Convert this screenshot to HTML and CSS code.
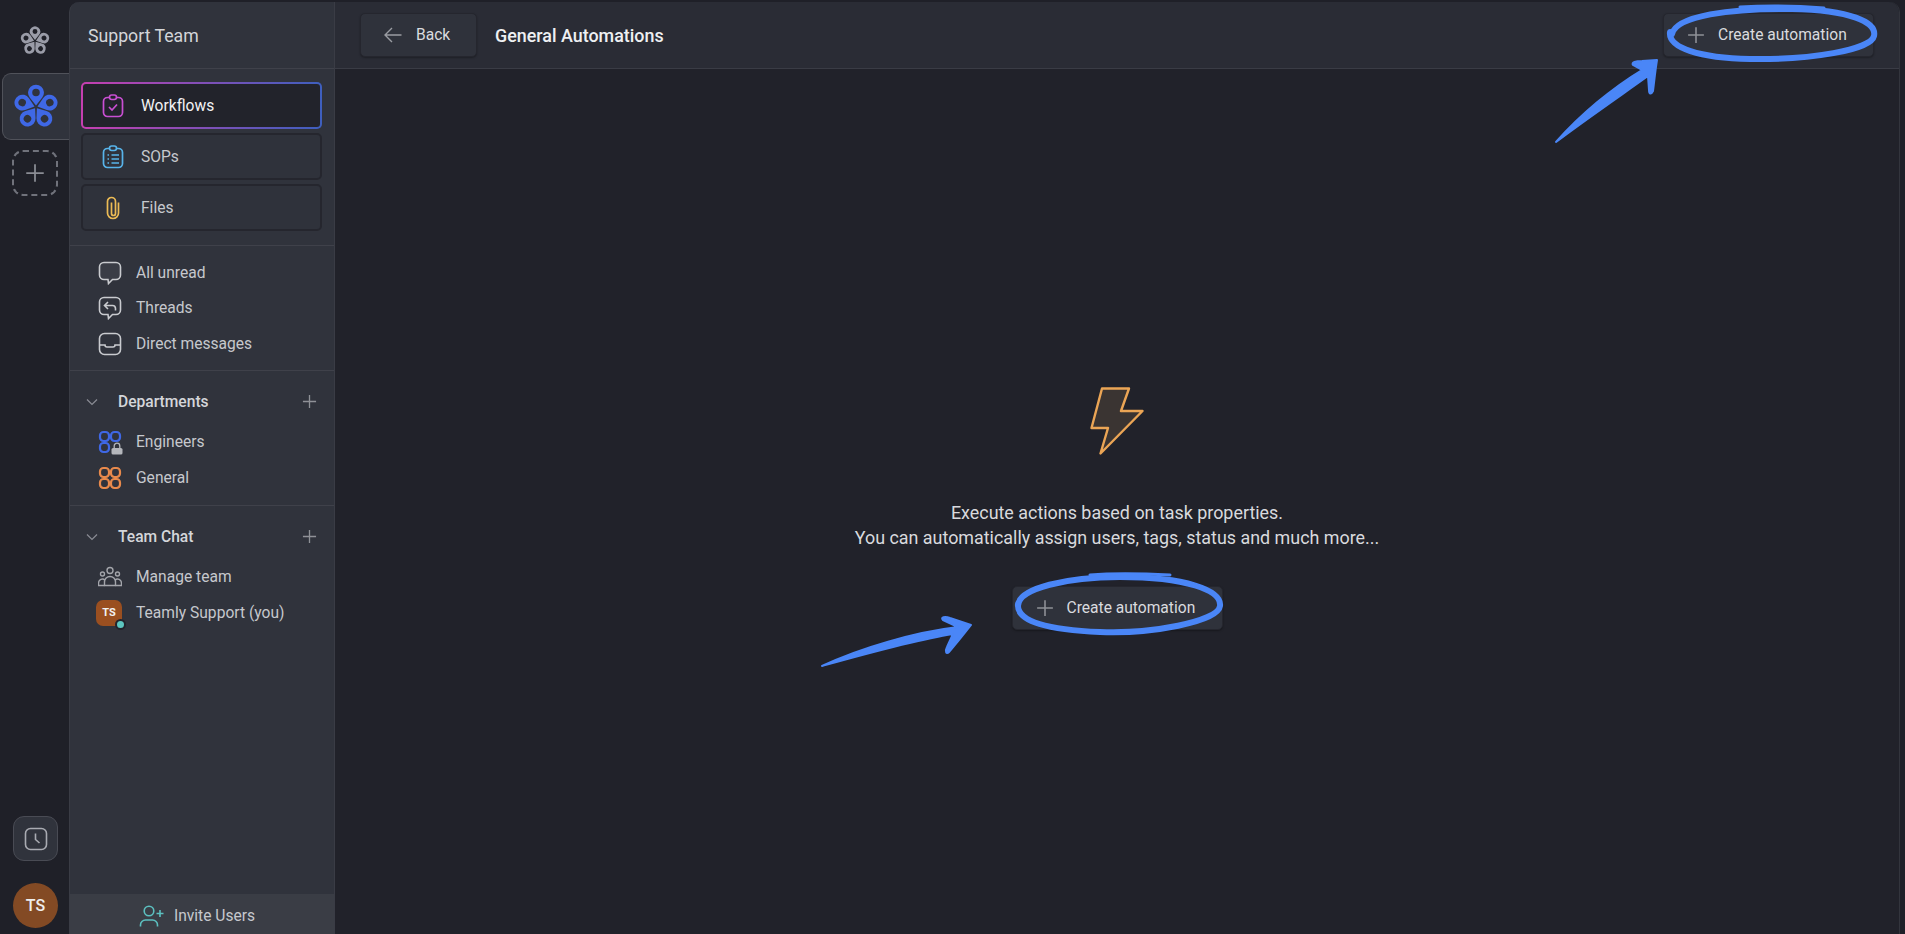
FILE: index.html
```html
<!DOCTYPE html>
<html>
<head>
<meta charset="utf-8">
<title>General Automations</title>
<link rel="stylesheet" href="styles.css">
</head>
<body>

<svg class="defs" width="0" height="0">
  <symbol id="petals" viewBox="-22 -22 44 44">
    <g id="petal">
      <path d="M0 -1.5 L-6 -9 A7.6 7.6 0 1 1 6 -9 Z M0 -17.5 A3.6 3.6 0 1 0 0 -10.3 A3.6 3.6 0 1 0 0 -17.5 Z" fill-rule="evenodd" />
    </g>
    <use href="#petal" transform="rotate(72)" />
    <use href="#petal" transform="rotate(144)" />
    <use href="#petal" transform="rotate(216)" />
    <use href="#petal" transform="rotate(288)" />
  </symbol>
  <symbol id="plus" viewBox="0 0 16 16">
    <path d="M8 1v14M1 8h14" fill="none" stroke="currentColor" stroke-width="1.4" />
  </symbol>
  <symbol id="chevron" viewBox="0 0 12 8">
    <path d="M1 1.5l5 5 5-5" fill="none" stroke="currentColor" stroke-width="1.2" />
  </symbol>
  <symbol id="apps" viewBox="0 0 24 24">
    <g fill="none" stroke="currentColor" stroke-width="2.2">
      <rect x="2" y="2" width="9" height="9" rx="3.5" />
      <rect x="13" y="2" width="9" height="9" rx="3.5" />
      <rect x="2" y="13" width="9" height="9" rx="3.5" />
    </g>
  </symbol>
</svg>

<nav class="rail">
  <div class="rail-logo">
    <svg class="logo-small"><use href="#petals" /></svg>
  </div>
  <div class="rail-tab">
    <svg class="logo-big"><use href="#petals" /></svg>
  </div>
  <div class="rail-add">
    <svg class="rail-add-icon"><use href="#plus" /></svg>
  </div>
  <div class="rail-bottom">
    <div class="rail-clock">
      <svg width="24" height="24" viewBox="0 0 24 24" fill="none" stroke="#a9abb2" stroke-width="1.6">
        <rect x="1.5" y="1.5" width="21" height="21" rx="5" />
        <path d="M11.5 6.5v6l4 3.5" />
      </svg>
    </div>
    <div class="rail-avatar">TS</div>
  </div>
</nav>

<aside class="sidebar">
  <div class="team-name">Support Team</div>

  <div class="nav-group">
    <div class="nav-btn nav-btn-active">
      <svg class="nav-icon" viewBox="0 0 24 24" fill="none" stroke="#c94fd3" stroke-width="1.7">
        <rect x="2.5" y="3.5" width="19" height="19" rx="4" />
        <rect x="8.5" y="1" width="7" height="4.5" rx="2.2" fill="#22232b" />
        <path d="M8 13l3 3 5-5.5" />
      </svg>
      <span>Workflows</span>
    </div>
    <div class="nav-btn">
      <svg class="nav-icon" viewBox="0 0 24 24" fill="none" stroke="#58b4ea" stroke-width="1.7">
        <rect x="2.5" y="3.5" width="19" height="19" rx="4" />
        <rect x="8.5" y="1" width="7" height="4.5" rx="2.2" fill="#2f323b" />
        <path d="M6.5 10h1.5M10.5 10h7.5M6.5 14h1.5M10.5 14h7.5M6.5 18h1.5M10.5 18h7.5" />
      </svg>
      <span>SOPs</span>
    </div>
    <div class="nav-btn">
      <svg class="nav-icon" viewBox="0 0 24 24" fill="none" stroke="#ecbb55" stroke-width="1.7">
        <path d="M10.5 6.5v11a2 2 0 0 0 4 0V5.5a4 4 0 0 0-8 0V17a5.5 5.5 0 0 0 11 0V6.5" />
      </svg>
      <span>Files</span>
    </div>
  </div>

  <ul class="list list-top">
    <li class="row">
      <svg class="row-icon" viewBox="0 0 24 24" fill="#3a3d46" stroke="#c9cbcf" stroke-width="1.6">
        <path d="M6 1.5h12a4.5 4.5 0 0 1 4.5 4.5v8a4.5 4.5 0 0 1-4.5 4.5h-3.5L10.5 22.5l-.5-4H6A4.5 4.5 0 0 1 1.5 14V6A4.5 4.5 0 0 1 6 1.5z" />
      </svg>
      <span>All unread</span>
    </li>
    <li class="row">
      <svg class="row-icon" viewBox="0 0 24 24" fill="none" stroke="#c9cbcf" stroke-width="1.6">
        <path d="M6 1.5h12a4.5 4.5 0 0 1 4.5 4.5v8a4.5 4.5 0 0 1-4.5 4.5h-3.5L10.5 22.5l-.5-4H6A4.5 4.5 0 0 1 1.5 14V6A4.5 4.5 0 0 1 6 1.5z" />
        <path d="M10 6L6.5 9.5 10 13M6.5 9.5h8a3 3 0 0 1 3 3v2" />
      </svg>
      <span>Threads</span>
    </li>
    <li class="row">
      <svg class="row-icon" viewBox="0 0 24 24" fill="none" stroke="#c9cbcf" stroke-width="1.6">
        <rect x="1.5" y="1.5" width="21" height="21" rx="5" />
        <path d="M1.5 13h5.5a2 2 0 0 0 2 2h6a2 2 0 0 0 2-2h5.5" />
      </svg>
      <span>Direct messages</span>
    </li>
  </ul>

  <section class="section">
    <div class="section-head">
      <svg class="chevron"><use href="#chevron" /></svg>
      <span>Departments</span>
      <svg class="section-plus"><use href="#plus" /></svg>
    </div>
    <ul class="list">
      <li class="row">
        <span class="row-icon apps-wrap">
          <svg class="row-icon apps-blue"><use href="#apps" /></svg>
          <svg class="apps-lock" viewBox="0 0 12 13">
            <path d="M3.2 6V4a2.8 2.8 0 0 1 5.6 0v2" fill="none" stroke="#b4b6bb" stroke-width="1.3" />
            <rect x="0.5" y="6" width="11" height="6.5" rx="1.6" fill="#b4b6bb" />
          </svg>
        </span>
        <span>Engineers</span>
      </li>
      <li class="row">
        <svg class="row-icon apps-orange" viewBox="0 0 24 24" fill="none" stroke="currentColor" stroke-width="2.2">
          <rect x="2" y="2" width="9" height="9" rx="3.5" />
          <rect x="13" y="2" width="9" height="9" rx="3.5" />
          <rect x="2" y="13" width="9" height="9" rx="3.5" />
          <rect x="13" y="13" width="9" height="9" rx="3.5" />
        </svg>
        <span>General</span>
      </li>
    </ul>
  </section>

  <section class="section">
    <div class="section-head">
      <svg class="chevron"><use href="#chevron" /></svg>
      <span>Team Chat</span>
      <svg class="section-plus"><use href="#plus" /></svg>
    </div>
    <ul class="list">
      <li class="row">
        <svg class="row-icon" viewBox="0 0 24 24" fill="none" stroke="#a3a5ab" stroke-width="1.4">
          <circle cx="12" cy="5.5" r="3" />
          <circle cx="4.5" cy="9" r="2" />
          <circle cx="19.5" cy="9" r="2" />
          <path d="M6.5 20.5v-3.5a5.5 5.5 0 0 1 11 0v3.5z" />
          <path d="M6.5 20.5H.5v-2.5a4 4 0 0 1 6.5-3M17.5 20.5h6v-2.5a4 4 0 0 0-6.5-3" />
        </svg>
        <span>Manage team</span>
      </li>
      <li class="row">
        <span class="user-badge">TS<i class="user-dot"></i></span>
        <span>Teamly Support (you)</span>
      </li>
    </ul>
  </section>

  <div class="invite">
    <svg width="25" height="22" viewBox="0 0 25 22" fill="none" stroke="#5cc0c0" stroke-width="1.6">
      <circle cx="10" cy="6" r="4.8" />
      <path d="M1.5 21.5v-1.5a5 5 0 0 1 5-5h7a5 5 0 0 1 5 5v1.5M17.5 8.5h7M21 5v7" />
    </svg>
    <span>Invite Users</span>
  </div>
</aside>

<main class="main">
  <header class="topbar">
    <div class="btn back-btn">
      <svg width="18" height="16" viewBox="0 0 18 16" fill="none" stroke="#9a9ca2" stroke-width="1.4">
        <path d="M17.5 8H1M8 1L1 8l7 7" />
      </svg>
      <span>Back</span>
    </div>
    <h1 class="title">General Automations</h1>
    <div class="btn create-btn top-create">
      <svg class="btn-plus"><use href="#plus" /></svg>
      <span>Create automation</span>
    </div>
  </header>

  <div class="empty">
    <svg class="bolt" viewBox="0 0 55 68">
      <path d="M12 1.5h27L31 24h21.5L10.5 66.5 18 41H1.5z" fill="#3a3432" stroke="#eba555" stroke-width="2.4" stroke-linejoin="round" />
    </svg>
    <p class="empty-text">Execute actions based on task properties.<br>You can automatically assign users, tags, status and much more...</p>
    <div class="btn create-btn">
      <svg class="btn-plus"><use href="#plus" /></svg>
      <span>Create automation</span>
    </div>
  </div>
</main>

<!-- hand drawn marks on top of the screenshot -->
<svg class="marks" viewBox="0 0 1905 934" width="1905" height="934">
  <g fill="none" stroke="#4a86f7" stroke-linecap="round" stroke-linejoin="round">
    <path d="M1672 34C1676 16 1730 8 1792 9C1850 10 1877 22 1874 36C1871 50 1810 60 1750 59C1700 58 1668 48 1670 32" stroke-width="6" />
    <path d="M1740 7C1770 5 1800 6 1824 8" stroke-width="3" />
    <path d="M1018 606C1018 588 1068 577 1120 577C1185 577 1222 590 1220 606C1218 622 1150 634 1100 632C1050 630 1016 622 1018 604" stroke-width="6" />
    <path d="M1090 575C1115 573 1150 574 1170 575" stroke-width="3" />
  </g>
  <g fill="#4a86f7" stroke="#4a86f7" stroke-width="2" stroke-linejoin="round">
    <path d="M1556 142C1580 115 1612 88 1642 70L1633 65C1631 62 1636 61 1642 61L1657 60C1655 72 1654 84 1653 91C1651 95 1649 94 1649 90L1648 76C1620 96 1585 120 1556 142z" />
    <path d="M822 666C860 648 915 632 958 627L943 620C940 617 945 616 950 618L971 625C964 634 956 644 949 652C946 655 945 651 947 647L953 634C915 640 865 654 822 666z" />
  </g>
</svg>

</body>
</html>
```

FILE: styles.css
```css
* {
  box-sizing: border-box;
  margin: 0;
  padding: 0;
}

html, body {
  height: 100%;
}

body {
  display: flex;
  position: relative;
  overflow: hidden;
  padding-top: 2px;
  background: #1f2028;
  font-family: Roboto, "Liberation Sans", sans-serif;
  font-size: 15.6px;
  color: #c6c8cd;
}

ul {
  list-style: none;
}

.defs {
  position: absolute;
}

/* far left rail */
.rail {
  display: flex;
  flex-direction: column;
  flex: none;
  width: 69px;
  padding-left: 2px;
}

.rail-logo {
  display: flex;
  justify-content: center;
  height: 71px;
  padding: 24px 2px 0 0;
}

.logo-small {
  width: 30px;
  height: 30px;
  fill: #9a9ca8;
}

.rail-tab {
  display: flex;
  align-items: center;
  justify-content: center;
  height: 67px;
  background: #30333c;
  border: 1px solid #50525a;
  border-right: none;
  border-radius: 9px 0 0 9px;
}

.logo-big {
  width: 46px;
  height: 46px;
  fill: #3f68e6;
}

.rail-add {
  display: flex;
  align-items: center;
  justify-content: center;
  width: 46px;
  height: 46px;
  margin: 10px 0 0 10px;
  border: 2px dashed #70727b;
  border-radius: 11px;
}

.rail-add-icon {
  width: 20px;
  height: 20px;
  color: #8a8c94;
}

.rail-bottom {
  display: flex;
  flex-direction: column;
  gap: 22px;
  margin-top: auto;
  padding: 0 0 6px 11px;
}

.rail-clock {
  display: flex;
  align-items: center;
  justify-content: center;
  width: 45px;
  height: 45px;
  background: #30333c;
  border: 1px solid #494b54;
  border-radius: 11px;
}

.rail-avatar {
  display: flex;
  align-items: center;
  justify-content: center;
  width: 45px;
  height: 45px;
  border-radius: 50%;
  background: #834a24;
  color: #eee;
  font-size: 16px;
  font-weight: 500;
}

/* team sidebar */
.sidebar {
  display: flex;
  flex-direction: column;
  flex: none;
  width: 266px;
  background: #30333c;
  border-left: 1px solid #3a3c45;
  border-right: 1px solid #3a3c45;
  border-radius: 10px 0 0 0;
}

.team-name {
  height: 67px;
  padding-top: 23px;
  border-bottom: 1px solid #3f414a;
  font-size: 17.7px;
  line-height: 22px;
  padding-left: 18px;
  color: #d4d6da;
}

.nav-group {
  display: flex;
  flex-direction: column;
  gap: 4px;
  padding: 13px 12px 14px 11px;
}

.nav-btn {
  display: flex;
  align-items: center;
  gap: 16px;
  height: 47px;
  padding-left: 18px;
  background: #2f323b;
  border: 2px solid #25262e;
  border-radius: 5px;
}

.nav-btn-active {
  background: linear-gradient(#22232b, #22232b) padding-box, linear-gradient(90deg, #c63fb0, #3e5fbe) border-box;
  border-color: transparent;
  color: #f2f2f4;
}

.nav-icon {
  flex: none;
  width: 24px;
  height: 24px;
}

.list-top {
  padding: 9px 0 8px;
  border-top: 1px solid #3f414a;
}

.row {
  display: flex;
  align-items: center;
  gap: 14px;
  height: 35.5px;
  padding-left: 28px;
}

.row-icon {
  flex: none;
  width: 24px;
  height: 24px;
}

.section {
  padding-bottom: 9px;
  border-top: 1px solid #3f414a;
}

.section-head {
  display: flex;
  align-items: center;
  height: 26px;
  margin: 18px 0 10px;
  padding-left: 16px;
  color: #d4d6da;
  font-weight: 500;
}

.chevron {
  flex: none;
  width: 12px;
  height: 8px;
  margin-right: 20px;
  color: #8a8c94;
}

.section-plus {
  width: 15px;
  height: 15px;
  margin: 0 17px 0 auto;
  color: #8f9197;
}

.apps-wrap {
  position: relative;
}

.apps-blue {
  color: #3f68e6;
}

.apps-orange {
  color: #e98a4c;
}

.apps-lock {
  position: absolute;
  right: -1px;
  bottom: -1px;
  width: 12px;
  height: 13px;
}

.user-badge {
  position: relative;
  display: flex;
  align-items: center;
  justify-content: center;
  flex: none;
  width: 26px;
  height: 26px;
  margin-left: -2px;
  background: #9a4f20;
  border-radius: 7px;
  color: #f2f2f2;
  font-size: 11px;
  font-weight: 700;
}

.user-dot {
  position: absolute;
  right: -4px;
  bottom: -4px;
  width: 11px;
  height: 11px;
  background: #5cc6c0;
  border: 2px solid #23242c;
  border-radius: 50%;
}

.invite {
  display: flex;
  align-items: center;
  justify-content: center;
  gap: 10px;
  height: 40px;
  margin-top: auto;
  padding: 3px 10px 0 0;
  background: #3a3d45;
}

/* main area */
.main {
  display: flex;
  flex-direction: column;
  flex: none;
  width: 1565px;
  background: #21222a;
  border-right: 1px solid #33353d;
  border-top-right-radius: 10px;
}

.topbar {
  display: flex;
  align-items: center;
  flex: none;
  height: 67px;
  padding: 0 25px;
  background: #2a2c35;
  border-bottom: 1px solid #3a3c45;
  border-top-right-radius: 10px;
}

.btn {
  display: flex;
  align-items: center;
  height: 44px;
  background: #2f323b;
  border: 1px solid #25262e;
  border-radius: 5px;
  box-shadow: 0 1px 2px rgba(0, 0, 0, .3);
  color: #dadbdf;
}

.back-btn {
  gap: 14px;
  width: 117px;
  padding-left: 23px;
}

.title {
  margin-left: 18px;
  color: #eef0f2;
  font-size: 17.9px;
  font-weight: 500;
}

.create-btn {
  gap: 13px;
  width: 211px;
  padding: 0 0 0 23px;
}

.top-create {
  margin-left: auto;
}

.btn-plus {
  flex: none;
  width: 18px;
  height: 18px;
  color: #8f9197;
}

.empty {
  display: flex;
  flex-direction: column;
  align-items: center;
  flex: 1;
  padding-top: 318px;
}

.bolt {
  width: 55px;
  height: 68px;
}

.empty-text {
  margin: 45px 0 36px;
  color: #d9dade;
  font-size: 17.9px;
  line-height: 25px;
  text-align: center;
}

/* pen marks lie over everything */
.marks {
  position: absolute;
  left: 0;
  top: 0;
  pointer-events: none;
}
```
